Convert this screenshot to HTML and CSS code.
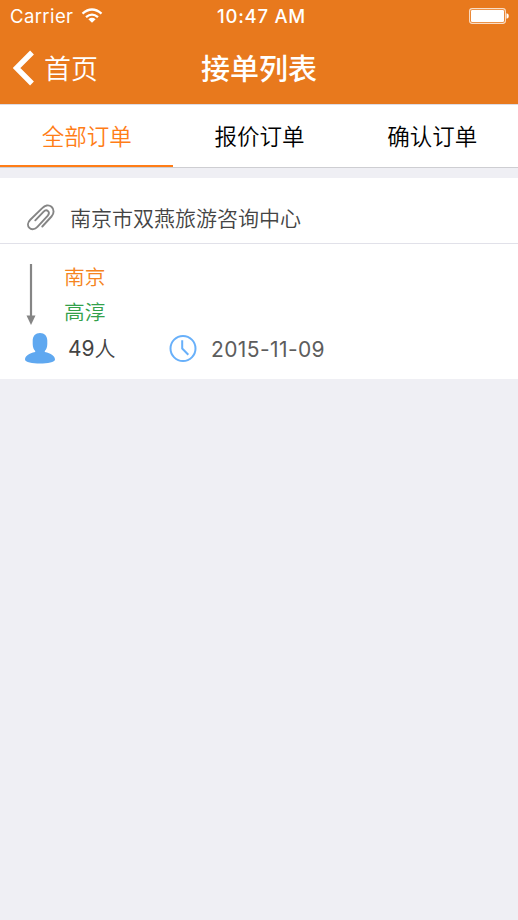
FILE: index.html
```html
<!DOCTYPE html>
<html lang="zh-CN">
<head>
<meta charset="utf-8">
<title>接单列表</title>
<link rel="stylesheet" href="styles.css">
</head>
<body>
<header class="header">
  <div class="status">
    <div class="carrier"><span class="carrier-name">Carrier</span>
      <svg class="wifi" width="22" height="16" viewBox="0 0 22 16" fill="none" stroke="#fff" stroke-width="2.3"><path d="M1.5 5.6Q11-2.6 20.5 5.6M5 9.2Q11 4 17 9.2"/><path d="M7.4 11.2Q11 8.4 14.6 11.2L11 14.8Z" fill="#fff" stroke="none"/></svg>
    </div>
    <time class="clock">10:47 AM</time>
    <div class="battery-wrap">
      <svg width="40" height="16" viewBox="0 0 40 16"><rect x=".6" y=".6" width="35.8" height="14.8" rx="2.6" fill="none" stroke="#fff" stroke-opacity=".75" stroke-width="1.1"/><rect x="2" y="2" width="33" height="12" rx="1.2" fill="#fff"/><path d="M37.5 5.2Q39.8 5.5 39.8 8T37.5 10.8Z" fill="#fff"/></svg>
    </div>
  </div>
  <nav class="navbar">
    <a class="back"><svg width="22" height="36" viewBox="0 0 22 36" fill="none" stroke="#fff" stroke-width="5.4"><path d="M19 2.5 3.5 18 19 33.5"/></svg><span class="back-label">首页</span></a>
    <h1 class="title">接单列表</h1>
  </nav>
</header>
<nav class="tabs">
  <a class="tab tab-active">全部订单</a>
  <a class="tab">报价订单</a>
  <a class="tab">确认订单</a>
</nav>
<main class="order">
  <div class="company">
    <svg class="clip" width="28" height="28" viewBox="0 0 28 28" fill="none" stroke="#858585" stroke-width="1.9" stroke-linecap="round"><path d="M15.3 23.5 24.5 13.5C27.3 10.4 27.2 6.2 24.5 3.8 21.7 1.4 18 2.3 15.2 5.2L3.3 16.8C.6 19.5.3 22.8 2.4 24.9 4.5 27 7.9 26.4 10.4 23.8L20.6 12.8C22.2 11 22.2 9.3 21 8.1 19.7 6.9 17.9 7.2 16.4 8.8L8.3 17.3"/></svg>
    <span>南京市双燕旅游咨询中心</span>
  </div>
  <div class="route">
    <svg class="arrow" width="10" height="61" viewBox="0 0 10 61"><path d="M5 0V53" stroke="#858585" stroke-width="2.2"/><path d="M.5 51.5H9.5L5 61Z" fill="#858585"/></svg>
    <div class="places"><span class="from">南京</span><span class="to">高淳</span></div>
  </div>
  <div class="details">
    <svg class="person" width="30" height="31" viewBox="0 0 30 31" fill="#5fa8f0"><path d="M15 0C19.5 0 22.3 3 22.3 7.5V11C22.3 14.5 21.2 16.6 19.8 18V19C26 20.2 30 23 30 26.5 30 31.8 0 31.8 0 26.5 0 23 4 20.2 10.2 19V18C8.8 16.6 7.7 14.5 7.7 11V7.5C7.7 3 10.5 0 15 0Z"/></svg>
    <span class="people">49<span class="unit">人</span></span>
    <svg class="time-icon" width="28" height="28" viewBox="0 0 28 28" fill="none" stroke="#68b0fa" stroke-width="2"><circle cx="14" cy="13.5" r="12.5"/><path d="M13.2 5.3V13.5L19.3 19.7" stroke-linejoin="round"/></svg>
    <span class="date">2015-11-09</span>
  </div>
</main>
</body>
</html>
```
FILE: styles.css
```css
* { box-sizing: border-box; }
body {
  margin: 0;
  min-height: 920px;
  background: #efeff4;
  font-family: Inter, "Noto Sans CJK SC", sans-serif;
  color: #444;
}
svg { display: block; flex: none; }
.header { height: 104px; background: #e8791d; color: #fff; }
.status {
  display: grid;
  grid-template-columns: 1fr auto 1fr;
  height: 32px;
  padding: 0 9px 0 10px;
  align-items: center;
  line-height: 32px;
}
.carrier { display: flex; align-items: center; gap: 8px; font-size: 18.5px; font-weight: 375; }
.carrier-name { letter-spacing: .4px; }
.clock { padding-left: 4px; font-size: 18.5px; font-weight: 550; letter-spacing: .75px; }
.battery-wrap { display: flex; justify-content: flex-end; }
.navbar {
  display: grid;
  grid-template-columns: 1fr auto 1fr;
  align-items: center;
  height: 72px;
  padding: 0 13px;
}
.back { display: flex; align-items: center; gap: 9px; font-size: 27px; font-weight: 350; line-height: 36px; }
.back-label { padding-top: 3px; }
.title { margin: 0; padding-top: 3px; font-size: 29px; font-weight: 500; line-height: 40px; }
.tabs {
  display: grid;
  grid-template-columns: repeat(3, 1fr);
  height: 64px;
  background: #fff;
  border-top: 1px solid #dcdce5;
  border-bottom: 1px solid #ceced2;
}
.tab { height: 62px; padding: 1px 0 0 1px; font-size: 22.5px; line-height: 62px; font-weight: 350; text-align: center; color: #000; }
.tab-active { color: #ff7d17; border-bottom: 2px solid #ff7d17; }
.order { height: 201px; margin-top: 10px; background: #fff; }
.company {
  display: flex;
  align-items: center;
  gap: 15px;
  height: 66px;
  padding: 12px 27px 0;
  border-bottom: 1px solid #e1e1e9;
  font-size: 21px;
  font-weight: 350;
}
.route { display: flex; gap: 28px; height: 89px; padding: 16px 26px 0; }
.arrow { margin-top: 4px; }
.places { display: flex; flex-direction: column; font-size: 20.7px; line-height: 35px; font-weight: 350; }
.from { color: #f58420; }
.to { color: #33a14b; }
.details { display: flex; align-items: center; height: 31px; padding-left: 25px; font-size: 21px; font-weight: 390; }
.people { width: 101px; margin-left: 13px; padding-top: 1px; line-height: 28px; }
.unit { font-size: 21px; font-weight: 350; }
.date { margin-left: 14px; padding-top: 1px; letter-spacing: .4px; color: #5d5d5d; }
```
